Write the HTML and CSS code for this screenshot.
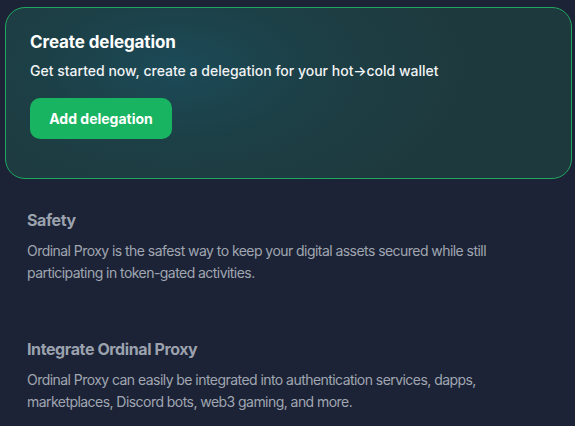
FILE: index.html
```html
<!DOCTYPE html>
<html>
<head>
<meta charset="utf-8">
<link rel="stylesheet" href="styles.css">
</head>
<body>
<div class="page">
  <section class="card">
    <h1 class="card-title">Create delegation</h1>
    <p class="card-sub">Get started now, create a delegation for your hot→cold wallet</p>
    <button class="btn">Add delegation</button>
  </section>
  <section class="info">
    <h2 class="info-title">Safety</h2>
    <p class="info-text">Ordinal Proxy is the safest way to keep your digital assets secured while still participating in token-gated activities.</p>
  </section>
  <section class="info info-second">
    <h2 class="info-title">Integrate Ordinal Proxy</h2>
    <p class="info-text">Ordinal Proxy can easily be integrated into authentication services, dapps, marketplaces, Discord bots, web3 gaming, and more.</p>
  </section>
</div>
</body>
</html>
```
FILE: styles.css
```css
html, body {
  margin: 0;
  padding: 0;
  background: #1c2336;
  height: 100%;
  overflow: hidden;
}
body {
  font-family: Inter, "Noto Sans", sans-serif;
  color: #fff;
}
.page {
  padding: 7px 3px 0 5px;
}
.card {
  box-sizing: border-box;
  height: 172px;
  border: 1px solid #20a862;
  border-radius: 20px;
  padding: 22px 24px 0 24px;
  background:
    radial-gradient(ellipse 300px 160px at 170px 60px, rgba(27, 76, 90, 0.9) 0%, rgba(27, 70, 80, 0.5) 45%, rgba(30, 58, 62, 0) 100%),
    #1e393d;
}
.card-title {
  margin: 0;
  font-size: 17px;
  line-height: 24px;
  font-weight: 700;
  letter-spacing: -0.1px;
}
.card-sub {
  margin: 7px 0 0;
  font-size: 14px;
  line-height: 20px;
  font-weight: 500;
  color: #f1f3f5;
}
.btn {
  margin-top: 17px;
  width: 142px;
  height: 41px;
  border: none;
  border-radius: 10px;
  background: #19b462;
  color: #fff;
  font-family: Inter, "Noto Sans", sans-serif;
  font-size: 14px;
  font-weight: 700;
  padding: 0;
}
.info {
  padding: 29px 24px 0 22px;
}
.info-second {
  padding-top: 53px;
}
.info-title {
  margin: 0;
  font-size: 16px;
  line-height: 24px;
  font-weight: 700;
  letter-spacing: -0.4px;
  color: #9ba2ae;
}
.info-text {
  margin: 8px 0 0;
  font-size: 14px;
  line-height: 22px;
  letter-spacing: -0.55px;
  color: #a0a6b1;
}
```
